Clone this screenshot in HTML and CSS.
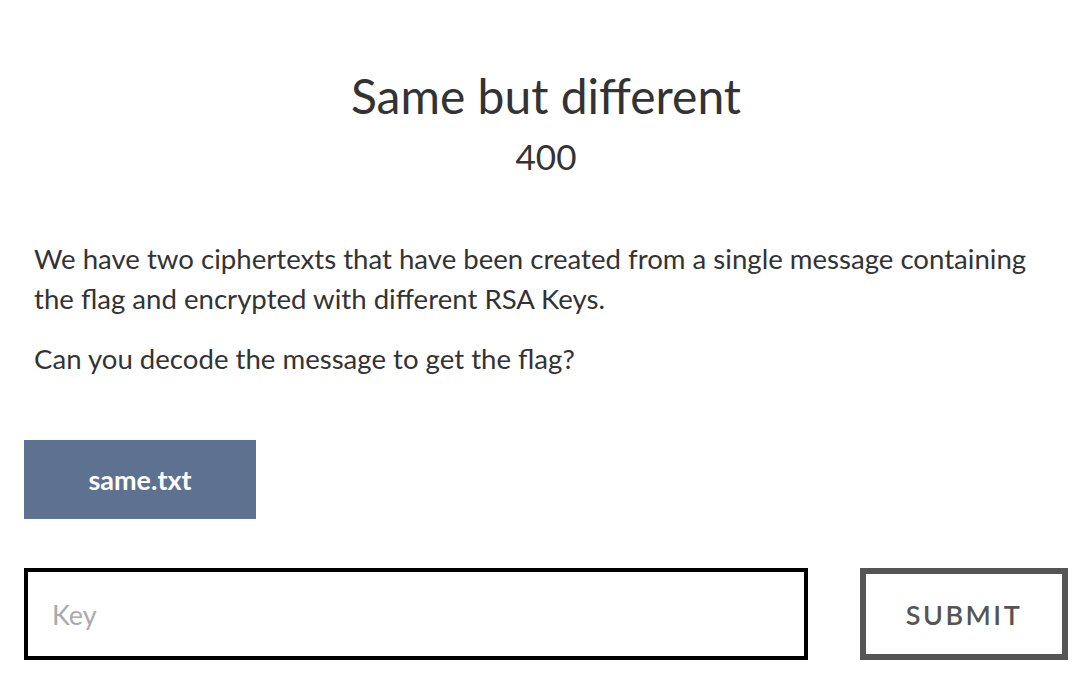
FILE: index.html
```html
<!DOCTYPE html>
<html>
<head>
<meta charset="utf-8">
<link rel="stylesheet" href="styles.css">
</head>
<body>
<main class="page">
  <header class="head">
    <h1 class="title">Same but different</h1>
    <div class="points">400</div>
  </header>
  <section class="desc">
    <p>We have two ciphertexts that have been created from a single message containing the flag and encrypted with different RSA Keys.</p>
    <p>Can you decode the message to get the flag?</p>
  </section>
  <div class="files">
    <a class="file-btn">same.txt</a>
  </div>
  <form class="submit-row">
    <input class="key-input" type="text" placeholder="Key">
    <button class="submit-btn" type="button">SUBMIT</button>
  </form>
</main>
</body>
</html>
```

FILE: styles.css
```css
html, body {
  margin: 0;
  padding: 0;
  background: #fff;
}
body {
  font-family: Lato, "Open Sans", sans-serif;
  color: #333;
}
.page {
  padding: 0 20px 0 24px;
}
.head {
  text-align: center;
  padding-top: 68px;
}
.title {
  margin: 0;
  font-size: 48px;
  font-weight: 400;
  line-height: 56px;
  color: #333;
}
.points {
  font-size: 35px;
  line-height: 40px;
  margin-top: 12px;
}
.desc {
  margin-top: 63px;
  padding: 0 24px 0 10px;
}
.desc p {
  margin: 0 0 20px 0;
  font-size: 27.6px;
  line-height: 40px;
}
.files {
  margin-top: 61px;
}
.file-btn {
  display: inline-flex;
  align-items: center;
  justify-content: center;
  width: 232px;
  height: 79px;
  background: #5d7190;
  color: #fff;
  font-weight: 700;
  font-size: 27px;
}
.submit-row {
  display: flex;
  justify-content: space-between;
  margin-top: 49px;
}
.key-input {
  box-sizing: border-box;
  width: 784px;
  height: 92px;
  border: 4px solid #000;
  padding: 0 0 0 24px;
  font-family: Lato, sans-serif;
  font-size: 27px;
  outline: none;
}
.key-input::placeholder {
  color: #aaa;
}
.submit-btn {
  box-sizing: border-box;
  width: 208px;
  height: 92px;
  border: 6px solid #555;
  background: #fff;
  color: #555;
  font-family: Lato, sans-serif;
  font-size: 27px;
  font-weight: 600;
  letter-spacing: 2.5px;
}
```
